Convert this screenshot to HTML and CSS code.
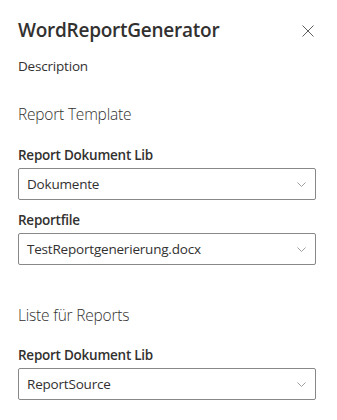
FILE: index.html
```html
<!DOCTYPE html>
<html lang="de">
<head>
    <meta charset="UTF-8">
    <meta name="viewport" content="width=device-width, initial-scale=1.0">
    <title>WordReportGenerator</title>
    <link rel="stylesheet" href="styles.css">
</head>
<body>
    <div class="pane">
        <div class="pane-header">
            <h2 class="pane-title">WordReportGenerator</h2>
            <button class="close-button" aria-label="Close">
                <svg width="12" height="12" viewBox="0 0 12 12">
                    <path d="M0.5 0.5 L11.5 11.5 M11.5 0.5 L0.5 11.5" stroke="#605e5c" stroke-width="1" fill="none"/>
                </svg>
            </button>
        </div>
        <p class="pane-description">Description</p>

        <div class="group">
            <h3 class="group-name">Report Template</h3>
            <div class="field">
                <label class="field-label">Report Dokument Lib</label>
                <div class="dropdown">
                    <span class="dropdown-title">Dokumente</span>
                    <svg class="chevron" width="9" height="5" viewBox="0 0 9 5"><path d="M0.5 0.5 L4.5 4.5 L8.5 0.5" stroke="#a19f9d" fill="none"/></svg>
                </div>
            </div>
            <div class="field">
                <label class="field-label">Reportfile</label>
                <div class="dropdown">
                    <span class="dropdown-title">TestReportgenerierung.docx</span>
                    <svg class="chevron" width="9" height="5" viewBox="0 0 9 5"><path d="M0.5 0.5 L4.5 4.5 L8.5 0.5" stroke="#a19f9d" fill="none"/></svg>
                </div>
            </div>
        </div>

        <div class="group">
            <h3 class="group-name">Liste für Reports</h3>
            <div class="field">
                <label class="field-label">Report Dokument Lib</label>
                <div class="dropdown">
                    <span class="dropdown-title">ReportSource</span>
                    <svg class="chevron" width="9" height="5" viewBox="0 0 9 5"><path d="M0.5 0.5 L4.5 4.5 L8.5 0.5" stroke="#a19f9d" fill="none"/></svg>
                </div>
            </div>
        </div>
    </div>
</body>
</html>
```

FILE: styles.css
```css
body {
    margin: 0;
    padding: 0;
    background-color: #ffffff;
    font-family: 'Segoe UI', 'Open Sans', sans-serif;
    color: #323130;
}

.pane {
    padding: 16px 21px 0 18px;
    display: flex;
    flex-direction: column;
}

.pane-header {
    display: flex;
    justify-content: space-between;
    align-items: center;
}

.pane-title {
    margin: 0;
    font-size: 19px;
    line-height: 28px;
    font-weight: 600;
    letter-spacing: -0.25px;
}

.close-button {
    background: none;
    border: none;
    padding: 0;
    margin: 2px 2px 0 0;
    width: 12px;
    height: 12px;
    display: flex;
    cursor: pointer;
}

.pane-description {
    margin: 12px 0 0 0;
    font-size: 13.5px;
    line-height: 20px;
    letter-spacing: -0.2px;
}

.group {
    display: flex;
    flex-direction: column;
}

.group-name {
    margin: 27px 0 0 0;
    font-size: 15.5px;
    line-height: 22px;
    font-weight: 300;
    letter-spacing: -0.2px;
}

.group + .group .group-name {
    margin-top: 39px;
}

.field {
    display: flex;
    flex-direction: column;
}

.field-label {
    margin-top: 20px;
    font-size: 13.5px;
    line-height: 20px;
    font-weight: 600;
    letter-spacing: -0.25px;
}

.field + .field .field-label {
    margin-top: 10px;
}

.group + .group .field-label {
    margin-top: 19px;
}

.dropdown {
    margin-top: 3px;
    height: 32px;
    box-sizing: border-box;
    border: 1px solid #8a8886;
    border-radius: 2px;
    padding: 0 9px 0 8px;
    display: flex;
    align-items: center;
    justify-content: space-between;
    font-size: 13.5px;
    letter-spacing: -0.2px;
}
```
